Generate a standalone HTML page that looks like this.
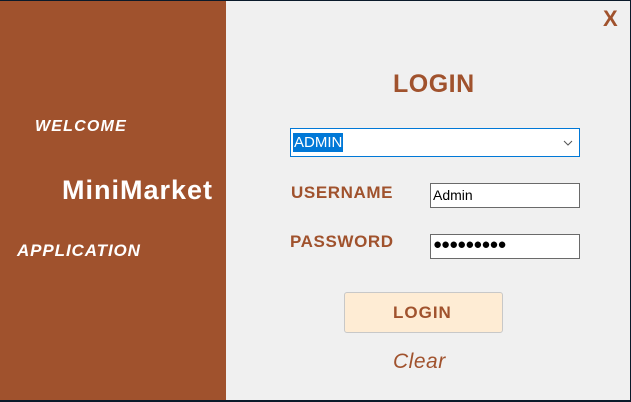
<!DOCTYPE html>
<html><head><style>
body{margin:0;width:631px;height:402px;overflow:hidden;background:#0a1a2a;position:relative;font-family:"Liberation Sans",sans-serif}
#w{position:absolute;left:0;top:1px;width:630px;height:399px;background:#f0f0f0}
#l{position:absolute;left:0;top:0;width:226px;height:399px;background:#a0522d;color:#fff;font-weight:bold}
.t{position:absolute;white-space:nowrap}
.br{color:#a0522d;font-weight:bold}
.box{position:absolute;background:#fff;border:1px solid #6a6a6a;box-sizing:border-box}
</style></head><body>
<div id="w">
<div id="l">
<div class="t" style="left:35px;top:117px;font-size:16px;font-style:italic;letter-spacing:1.2px">WELCOME</div>
<div class="t" style="left:62px;top:174px;font-size:27px;letter-spacing:1px">MiniMarket</div>
<div class="t" style="left:17px;top:240px;font-size:17px;font-style:italic;letter-spacing:0.9px">APPLICATION</div>
</div>
<div class="t br" style="left:603px;top:5px;font-size:22px">X</div>
<div class="t br" style="left:393px;top:69px;font-size:25px;letter-spacing:0.5px">LOGIN</div>
<div class="box" style="left:290px;top:127px;width:290px;height:29px;border-color:#0078d7">
<span style="position:absolute;left:2px;top:4px;background:#0078d7;color:#fff;font-size:15px;padding:0 1px;line-height:19px">ADMIN</span>
<svg style="position:absolute;right:6px;top:11px" width="10" height="6"><path d="M1 1L5 5L9 1" stroke="#555" fill="none"/></svg>
</div>
<div class="t br" style="left:291px;top:182px;font-size:17px;letter-spacing:0.6px">USERNAME</div>
<div class="box" style="left:430px;top:182px;width:150px;height:25px"><span style="position:absolute;left:2px;top:3px;font-size:14px">Admin</span></div>
<div class="t br" style="left:290px;top:231px;font-size:17px;letter-spacing:0.6px">PASSWORD</div>
<div class="box" style="left:430px;top:233px;width:150px;height:25px"><span style="position:absolute;left:2px;top:1px;font-size:15px;letter-spacing:-1px">●●●●●●●●●</span></div>
<div style="position:absolute;left:344px;top:291px;width:159px;height:41px;box-sizing:border-box;border:1px solid #c8c8c8;border-radius:3px;background:#feecd4"></div>
<div class="t br" style="left:393px;top:302px;font-size:17px;letter-spacing:1px">LOGIN</div>
<div class="t br" style="left:393px;top:349px;font-size:21px;font-style:italic;font-weight:normal;letter-spacing:0.5px">Clear</div>
</div>
</body></html>
